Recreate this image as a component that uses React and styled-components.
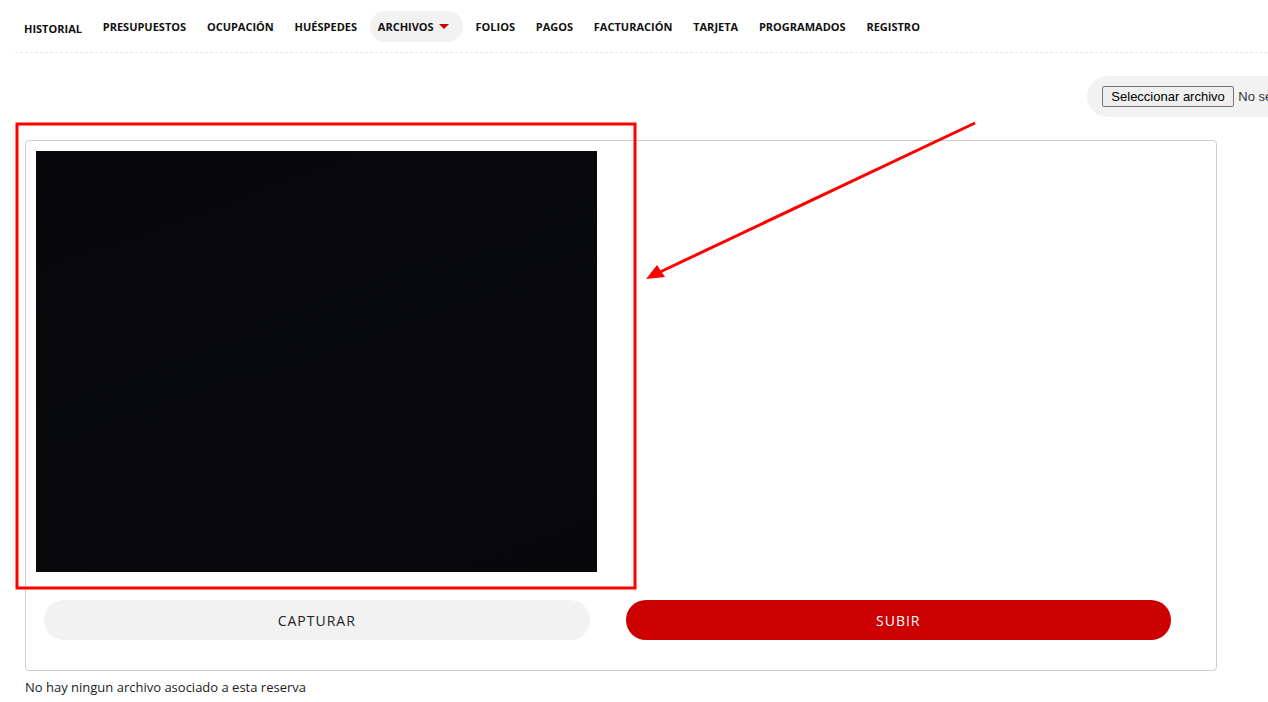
import React from 'react';
import styled, { createGlobalStyle } from 'styled-components';

const GlobalStyle = createGlobalStyle`
  *, *::before, *::after {
    box-sizing: border-box;
  }
  html, body {
    margin: 0;
    padding: 0;
    background: #fff;
    overflow: hidden;
  }
  body {
    font-family: "Open Sans", "Liberation Sans", sans-serif;
    color: #111;
  }
`;

const Page = styled.div`
  position: relative;
  width: 1268px;
  height: 702px;
  overflow: hidden;
`;

const Nav = styled.nav`
  display: flex;
  align-items: center;
  gap: 4.8px;
  padding: 11px 0 0 16px;
  height: 42px;
`;

const NavItem = styled.a`
  display: flex;
  align-items: center;
  height: 31px;
  padding: ${p => (p.$open ? '0 14px 0 8px' : '0 8px')};
  border-radius: 16px;
  background: ${p => (p.$open ? '#f2f2f2' : 'transparent')};
  font-size: 11px;
  font-weight: 700;
  color: #111;
  text-transform: uppercase;
  text-decoration: none;
  white-space: nowrap;
  cursor: pointer;
  ${p => p.$first && 'padding-top: 3px;'}
`;

const Caret = styled.span`
  width: 0;
  height: 0;
  margin-left: 5px;
  border-left: 5px solid transparent;
  border-right: 5px solid transparent;
  border-top: 5px solid #cc0000;
`;

const Divider = styled.hr`
  margin: 10px 0 0 15px;
  border: none;
  border-top: 1px dashed #e8e8e8;
`;

const UploadRow = styled.div`
  display: flex;
  justify-content: flex-end;
  margin-top: 23px;
`;

const UploadPill = styled.div`
  display: flex;
  align-items: center;
  gap: 4px;
  height: 41px;
  padding: 0 15px;
  margin-right: -205px;
  border-radius: 21px;
  background: #f2f2f2;
  font-family: "Liberation Sans", Arial, sans-serif;
  font-size: 13px;
  color: #333;
  white-space: nowrap;
`;

const FileButton = styled.button`
  height: 21px;
  padding: 0 8.5px;
  border: 1px solid #767676;
  border-radius: 2px;
  background: #efefef;
  font-family: "Liberation Sans", Arial, sans-serif;
  font-size: 13px;
  color: #000;
`;

const Card = styled.section`
  margin: 23px 0 0 25px;
  width: 1192px;
  padding: 10px 0 30px 10px;
  border: 1px solid #cccccc;
  border-radius: 4px;
`;

const Video = styled.div`
  width: 561px;
  height: 421px;
  background: linear-gradient(160deg, #07070c 0%, #090a0b 45%, #08080c 100%);
`;

const Actions = styled.div`
  display: grid;
  grid-template-columns: 1fr 1fr;
  gap: 36px;
  margin-top: 28px;
  padding: 0 45px 0 8px;
`;

const ActionButton = styled.button`
  height: 40px;
  border: none;
  border-radius: 20px;
  background: ${p => (p.$primary ? '#cc0000' : '#f2f2f2')};
  color: ${p => (p.$primary ? '#fff' : '#222')};
  font-family: "Open Sans", sans-serif;
  font-size: 14px;
  letter-spacing: 1px;
  text-transform: uppercase;
  cursor: pointer;
`;

const EmptyNote = styled.p`
  margin: 7px 0 0 25px;
  font-size: 13px;
  color: #222;
`;

const Annotation = styled.svg`
  position: absolute;
  left: 0;
  top: 0;
  pointer-events: none;
`;

const tabs = ['Historial', 'Presupuestos', 'Ocupación', 'Huéspedes', 'Archivos', 'Folios', 'Pagos', 'Facturación', 'Tarjeta', 'Programados', 'Registro'];

export default function App() {
  return (
    <Page>
      <GlobalStyle />
      <Nav>
        {tabs.map((t, i) => (
          <NavItem key={t} $open={t === 'Archivos'} $first={i === 0}>
            {t}
            {t === 'Archivos' && <Caret />}
          </NavItem>
        ))}
      </Nav>
      <Divider />
      <UploadRow>
        <UploadPill>
          <FileButton type="button">Seleccionar archivo</FileButton>
          <span>No se ha seleccionado ningún archivo</span>
        </UploadPill>
      </UploadRow>
      <Card>
        <Video />
        <Actions>
          <ActionButton type="button">Capturar</ActionButton>
          <ActionButton type="button" $primary>Subir</ActionButton>
        </Actions>
      </Card>
      <EmptyNote>No hay ningun archivo asociado a esta reserva</EmptyNote>

      {/* screenshot markup: red box + arrow */}
      <Annotation width="1268" height="702" viewBox="0 0 1268 702">
        <rect x="17" y="124" width="618" height="464" fill="none" stroke="#ff0000" strokeWidth="3" />
        <line x1="975" y1="123" x2="660" y2="272" stroke="#ff0000" strokeWidth="3" />
        <polygon points="646,279 657,265 665,277" fill="#ff0000" />
      </Annotation>
    </Page>
  );
}
